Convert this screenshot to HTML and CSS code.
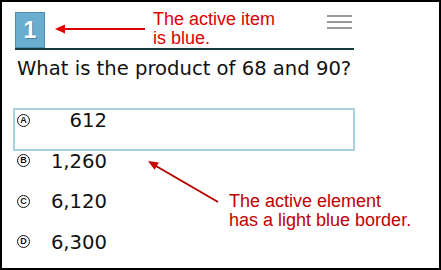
FILE: index.html
```html
<!DOCTYPE html>
<html lang="en">
<head>
    <meta charset="UTF-8">
    <title>Question item</title>
    <link rel="stylesheet" href="styles.css">
</head>
<body>

    <div class="frame">
        <div class="item-header">
            <div class="item-number">1</div>
            <div class="menu-icon">
                <span></span><span></span><span></span>
            </div>
        </div>

        <p class="question">What is the product of 68 and 90?</p>

        <div class="options">
            <div class="option active">
                <span class="letter">A</span>
                <span class="value">612</span>
            </div>
            <div class="option">
                <span class="letter">B</span>
                <span class="value">1,260</span>
            </div>
            <div class="option">
                <span class="letter">C</span>
                <span class="value">6,120</span>
            </div>
            <div class="option">
                <span class="letter">D</span>
                <span class="value">6,300</span>
            </div>
        </div>

        <!-- callouts -->
        <div class="note note-item">The active item<br>is blue.</div>
        <div class="note note-element">The active element<br>has a light blue border.</div>

        <svg class="arrows" width="441" height="270" viewBox="0 0 441 270">
            <line x1="145" y1="29" x2="63" y2="29" stroke="#e00000" stroke-width="2"/>
            <polygon points="55,29 65,24.5 65,33.5" fill="#e00000"/>
            <line x1="218" y1="202" x2="156" y2="166" stroke="#b80000" stroke-width="2"/>
            <polygon points="148,161 154.6,169.8 158.9,162.4" fill="#c80000"/>
        </svg>
    </div>

</body>
</html>
```

FILE: styles.css
```css
body {
    margin: 0;
    padding: 0;
    background: #fff;
}
.frame {
    position: relative;
    width: 441px;
    height: 270px;
    box-sizing: border-box;
    border: 2px solid #000;
    background: #fff;
    font-family: "DejaVu Sans", Verdana, sans-serif;
    color: #111;
}
.item-header {
    display: flex;
    justify-content: space-between;
    align-items: flex-start;
    width: 339px;
    margin: 10px 0 0 13px;
    border-bottom: 2px solid #163c3c;
}
.item-number {
    width: 28px;
    height: 34px;
    background: #6aadcf;
    border: 1px solid #4f8fae;
    color: #fff;
    font-family: "Liberation Sans", Arial, sans-serif;
    font-weight: bold;
    font-size: 23px;
    line-height: 34px;
    text-align: center;
    text-shadow: 1px 1px 0 rgba(0, 40, 60, 0.35);
}
.menu-icon {
    display: flex;
    flex-direction: column;
    gap: 4px;
    width: 25px;
    margin: 3px 2px 0 0;
}
.menu-icon span {
    display: block;
    height: 2px;
    background: #9a9a9a;
}
.question {
    margin: 7px 0 0 15px;
    font-size: 19.6px;
    line-height: 24px;
}
.options {
    margin: 27px 0 0 11px;
    width: 342px;
}
.option {
    display: flex;
    align-items: flex-start;
    height: 40.5px;
    box-sizing: border-box;
    border: 2px solid transparent;
    padding-left: 2px;
}
.option.active {
    height: 43px;
    margin-bottom: -2.5px;
    border-color: #a9cfe3;
}
.letter {
    width: 11px;
    height: 11px;
    margin-top: 3.5px;
    border: 1.3px solid #111;
    border-radius: 50%;
    font-family: "Liberation Sans", Arial, sans-serif;
    font-weight: bold;
    font-size: 9px;
    line-height: 11px;
    text-align: center;
}
.value {
    width: 57px;
    margin-left: 20px;
    font-size: 19.6px;
    line-height: 21px;
    text-align: right;
}
.note {
    position: absolute;
    font-family: "Liberation Sans", Arial, sans-serif;
    font-size: 18px;
    line-height: 19px;
}
.note-item {
    left: 151px;
    top: 8px;
    color: #dd0000;
}
.note-element {
    left: 227px;
    top: 190px;
    color: #c00000;
}
.arrows {
    position: absolute;
    left: -2px;
    top: -2px;
    pointer-events: none;
}
```
